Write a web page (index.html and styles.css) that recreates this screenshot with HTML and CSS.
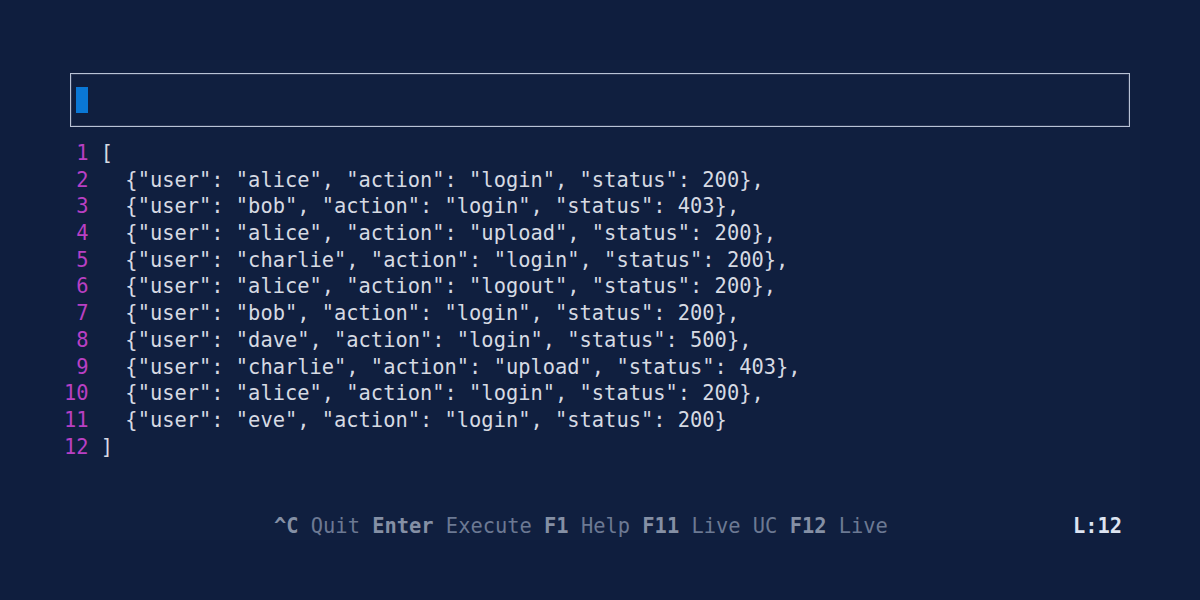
FILE: index.html
```html
<!DOCTYPE html>
<html>
<head>
<meta charset="utf-8">
<link rel="stylesheet" href="styles.css">
</head>
<body>
<div class="panel">
  <div class="input-box"><span class="cursor"></span></div>
  <div class="editor">
    <div class="line"><span class="ln">1</span><span class="code">[</span></div>
    <div class="line"><span class="ln">2</span><span class="code">  {"user": "alice", "action": "login", "status": 200},</span></div>
    <div class="line"><span class="ln">3</span><span class="code">  {"user": "bob", "action": "login", "status": 403},</span></div>
    <div class="line"><span class="ln">4</span><span class="code">  {"user": "alice", "action": "upload", "status": 200},</span></div>
    <div class="line"><span class="ln">5</span><span class="code">  {"user": "charlie", "action": "login", "status": 200},</span></div>
    <div class="line"><span class="ln">6</span><span class="code">  {"user": "alice", "action": "logout", "status": 200},</span></div>
    <div class="line"><span class="ln">7</span><span class="code">  {"user": "bob", "action": "login", "status": 200},</span></div>
    <div class="line"><span class="ln">8</span><span class="code">  {"user": "dave", "action": "login", "status": 500},</span></div>
    <div class="line"><span class="ln">9</span><span class="code">  {"user": "charlie", "action": "upload", "status": 403},</span></div>
    <div class="line"><span class="ln">10</span><span class="code">  {"user": "alice", "action": "login", "status": 200},</span></div>
    <div class="line"><span class="ln">11</span><span class="code">  {"user": "eve", "action": "login", "status": 200}</span></div>
    <div class="line"><span class="ln">12</span><span class="code">]</span></div>
  </div>
  <div class="footer">
    <div class="hints"><b>^C</b> Quit <b>Enter</b> Execute <b>F1</b> Help <b>F11</b> Live UC <b>F12</b> Live</div>
    <div class="pos">L:12</div>
  </div>
</div>
</body>
</html>
```
FILE: styles.css
```css
html, body {
  margin: 0;
  padding: 0;
  background: #0f1e3e;
  width: 1200px;
  height: 600px;
  overflow: hidden;
  font-family: "DejaVu Sans Mono", "Liberation Mono", monospace;
  font-size: 20.4px;
}

.panel {
  margin: 60px 0 0 60px;
  width: 1080px;
  height: 480px;
  background: #101f3f;
  display: flex;
  flex-direction: column;
}

.input-box {
  margin: 13px 10px 0 10px;
  border: 1px solid #b9c3d6;
  box-shadow: inset 0 0 0 1px #2a3654;
  padding: 13px 0 0 5px;
  box-sizing: border-box;
  height: 54px;
}

.cursor {
  display: block;
  width: 12px;
  height: 26px;
  background: #0a78d6;
}

.editor {
  margin-top: 13px;
  padding-left: 4px;
}

.line {
  display: flex;
  height: 26.7px;
  line-height: 26.7px;
  white-space: pre;
  color: #d6dae3;
}

.ln {
  width: 24.5px;
  text-align: right;
  color: #b940c4;
  margin-right: 12.3px;
}

.footer {
  margin-top: auto;
  display: flex;
  height: 26.7px;
  line-height: 26.7px;
  padding: 0 18px 0 41px;
  white-space: pre;
}

.hints {
  flex: 1;
  text-align: center;
  color: #6c7993;
}

.hints b {
  color: #8590a5;
  font-weight: bold;
}

.pos {
  color: #dde4f1;
  font-weight: bold;
  margin-left: 12px;
}
```
